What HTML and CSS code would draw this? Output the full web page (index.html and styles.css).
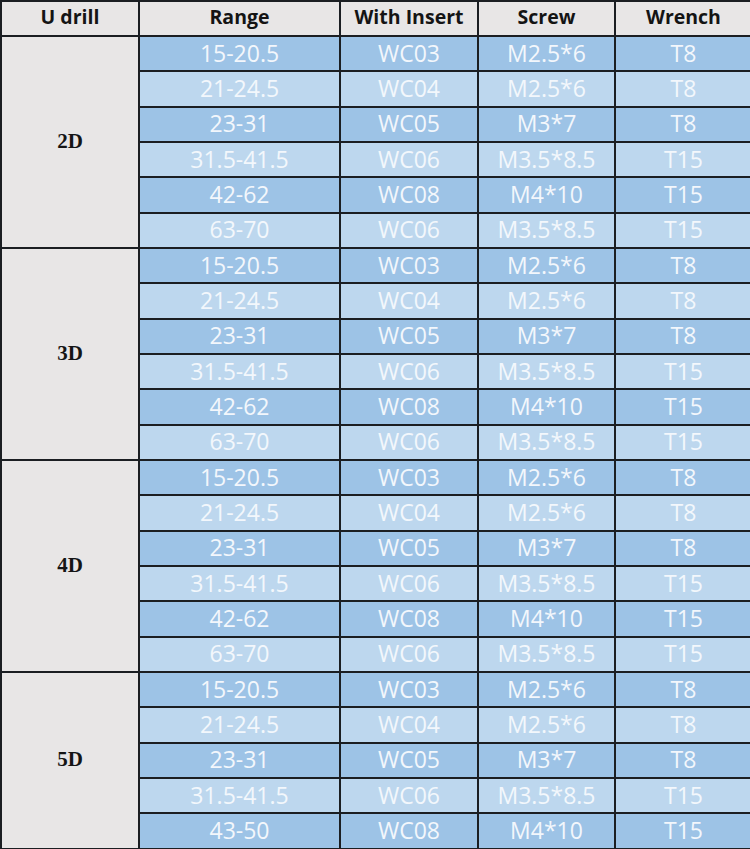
FILE: index.html
```html
<!DOCTYPE html>
<html>
<head>
<meta charset="utf-8">
<link rel="stylesheet" href="styles.css">
</head>
<body>
<table class="spec">
  <colgroup>
    <col class="c-drill"><col class="c-range"><col class="c-insert"><col class="c-screw"><col class="c-wrench">
  </colgroup>
  <thead>
    <tr class="head"><th>U drill</th><th>Range</th><th>With Insert</th><th>Screw</th><th>Wrench</th></tr>
  </thead>
  <tbody>
    <tr class="dark"><td class="group" rowspan="6">2D</td><td>15-20.5</td><td>WC03</td><td>M2.5*6</td><td>T8</td></tr>
    <tr class="light"><td>21-24.5</td><td>WC04</td><td>M2.5*6</td><td>T8</td></tr>
    <tr class="dark"><td>23-31</td><td>WC05</td><td>M3*7</td><td>T8</td></tr>
    <tr class="light"><td>31.5-41.5</td><td>WC06</td><td>M3.5*8.5</td><td>T15</td></tr>
    <tr class="dark"><td>42-62</td><td>WC08</td><td>M4*10</td><td>T15</td></tr>
    <tr class="light"><td>63-70</td><td>WC06</td><td>M3.5*8.5</td><td>T15</td></tr>

    <tr class="dark"><td class="group" rowspan="6">3D</td><td>15-20.5</td><td>WC03</td><td>M2.5*6</td><td>T8</td></tr>
    <tr class="light"><td>21-24.5</td><td>WC04</td><td>M2.5*6</td><td>T8</td></tr>
    <tr class="dark"><td>23-31</td><td>WC05</td><td>M3*7</td><td>T8</td></tr>
    <tr class="light"><td>31.5-41.5</td><td>WC06</td><td>M3.5*8.5</td><td>T15</td></tr>
    <tr class="dark"><td>42-62</td><td>WC08</td><td>M4*10</td><td>T15</td></tr>
    <tr class="light"><td>63-70</td><td>WC06</td><td>M3.5*8.5</td><td>T15</td></tr>

    <tr class="dark"><td class="group" rowspan="6">4D</td><td>15-20.5</td><td>WC03</td><td>M2.5*6</td><td>T8</td></tr>
    <tr class="light"><td>21-24.5</td><td>WC04</td><td>M2.5*6</td><td>T8</td></tr>
    <tr class="dark"><td>23-31</td><td>WC05</td><td>M3*7</td><td>T8</td></tr>
    <tr class="light"><td>31.5-41.5</td><td>WC06</td><td>M3.5*8.5</td><td>T15</td></tr>
    <tr class="dark"><td>42-62</td><td>WC08</td><td>M4*10</td><td>T15</td></tr>
    <tr class="light"><td>63-70</td><td>WC06</td><td>M3.5*8.5</td><td>T15</td></tr>

    <tr class="dark"><td class="group" rowspan="5">5D</td><td>15-20.5</td><td>WC03</td><td>M2.5*6</td><td>T8</td></tr>
    <tr class="light"><td>21-24.5</td><td>WC04</td><td>M2.5*6</td><td>T8</td></tr>
    <tr class="dark"><td>23-31</td><td>WC05</td><td>M3*7</td><td>T8</td></tr>
    <tr class="light"><td>31.5-41.5</td><td>WC06</td><td>M3.5*8.5</td><td>T15</td></tr>
    <tr class="dark"><td>43-50</td><td>WC08</td><td>M4*10</td><td>T15</td></tr>
  </tbody>
</table>
</body>
</html>
```
FILE: styles.css
```css
html, body {
  margin: 0;
  padding: 0;
  background: #ffffff;
}
.spec {
  border-collapse: collapse;
  table-layout: fixed;
  width: 751px;
  font-family: "Open Sans", "Noto Sans", sans-serif;
}
.c-drill { width: 138px; }
.c-range { width: 201px; }
.c-insert { width: 138px; }
.c-screw { width: 137px; }
.c-wrench { width: 137px; }

.spec th, .spec td {
  border: 2px solid #1b1e22;
  padding: 0;
  text-align: center;
  vertical-align: middle;
  box-sizing: border-box;
}
.head th {
  height: 35px;
  background: #e8e6e6;
  color: #141414;
  font-weight: 700;
  font-size: 19.5px;
  line-height: 1;
  padding-bottom: 3px;
}
.spec tbody td {
  height: 35.33px;
  color: #f3f7fc;
  font-size: 23px;
  line-height: 1;
  padding-bottom: 1px;
}
.dark td { background: #9dc3e6; }
.light td { background: #bdd7ee; }
.spec tbody td.group {
  background: #e8e6e6;
  color: #151515;
  font-family: "Liberation Serif", "DejaVu Serif", serif;
  font-weight: 700;
  font-size: 21px;
}
```
